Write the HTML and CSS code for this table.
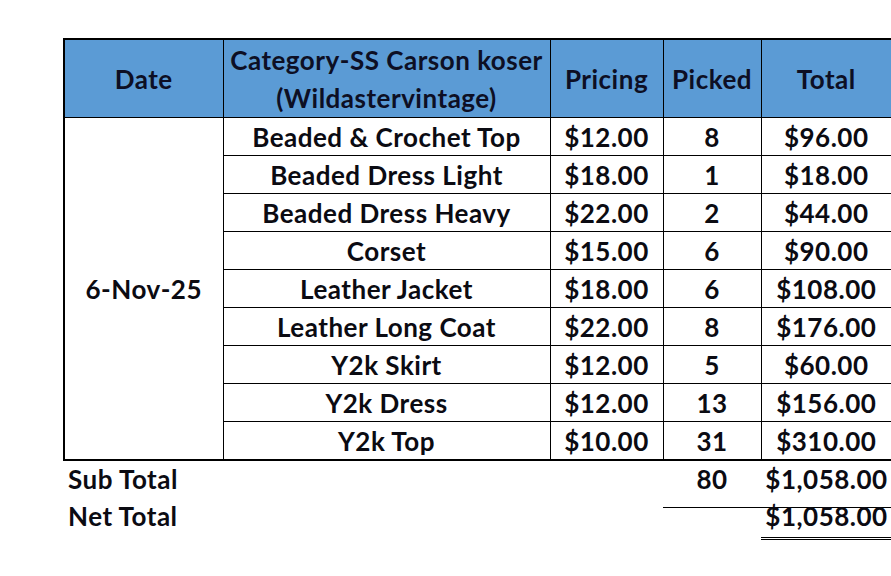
FILE: index.html
```html
<!DOCTYPE html>
<html>
<head>
<meta charset="utf-8">
<link rel="stylesheet" href="styles.css">
</head>
<body>
<div class="sheet">
<table class="report">
  <colgroup>
    <col class="c-date"><col class="c-cat"><col class="c-price"><col class="c-picked"><col class="c-total">
  </colgroup>
  <thead>
    <tr class="head">
      <th class="first left">Date</th>
      <th class="first">Category-SS Carson koser<br>(Wildastervintage)</th>
      <th class="first">Pricing</th>
      <th class="first">Picked</th>
      <th class="first right">Total</th>
    </tr>
  </thead>
  <tbody>
    <tr><td class="left last date" rowspan="9">6-Nov-25</td><td>Beaded &amp; Crochet Top</td><td>$12.00</td><td>8</td><td class="right">$96.00</td></tr>
    <tr><td>Beaded Dress Light</td><td>$18.00</td><td>1</td><td class="right">$18.00</td></tr>
    <tr><td>Beaded Dress Heavy</td><td>$22.00</td><td>2</td><td class="right">$44.00</td></tr>
    <tr><td>Corset</td><td>$15.00</td><td>6</td><td class="right">$90.00</td></tr>
    <tr><td>Leather Jacket</td><td>$18.00</td><td>6</td><td class="right">$108.00</td></tr>
    <tr><td>Leather Long Coat</td><td>$22.00</td><td>8</td><td class="right">$176.00</td></tr>
    <tr><td>Y2k Skirt</td><td>$12.00</td><td>5</td><td class="right">$60.00</td></tr>
    <tr><td>Y2k Dress</td><td>$12.00</td><td>13</td><td class="right">$156.00</td></tr>
    <tr><td class="last">Y2k Top</td><td class="last">$10.00</td><td class="last">31</td><td class="last right">$310.00</td></tr>
  </tbody>
  <tfoot>
    <tr class="sub">
      <td class="label">Sub Total</td><td></td><td></td><td class="under">80</td><td class="under">$1,058.00</td>
    </tr>
    <tr class="net">
      <td class="label">Net Total</td><td></td><td></td><td></td><td class="dbl">$1,058.00</td>
    </tr>
  </tfoot>
</table>
</div>
</body>
</html>
```
FILE: styles.css
```css
html, body {
  margin: 0;
  padding: 0;
  background: #ffffff;
}

.sheet {
  padding: 38px 0 0 63px;
}

.report {
  border-collapse: collapse;
  table-layout: fixed;
  width: 828px;
  font-family: Lato, "Open Sans", sans-serif;
  font-weight: 700;
  font-size: 26px;
  letter-spacing: 0.5px;
  color: #0b0b12;
}

.c-date { width: 159px; }
.c-cat { width: 327px; }
.c-price { width: 113px; }
.c-picked { width: 98px; }
.c-total { width: 131px; }

.report th,
.report tbody td {
  border: 1px solid #000;
  text-align: center;
  vertical-align: middle;
  padding: 0;
  white-space: nowrap;
}

.report .head th {
  background: #5b9bd5;
  color: #0d0f24;
  font-weight: 700;
  height: 77px;
  line-height: 38px;
}

.report tbody td {
  height: 37px;
  line-height: 30px;
}

.report .first { border-top: 2px solid #000; }
.report .left { border-left: 2px solid #000; }
.report .right { border-right: 2px solid #000; }
.report .last { border-bottom: 2px solid #000; }

.report tfoot td {
  border: none;
  padding: 0;
  text-align: center;
  white-space: nowrap;
  vertical-align: top;
}

.report tfoot .label {
  text-align: left;
  padding-left: 4px;
}

.report .sub td {
  line-height: 20px;
  padding-top: 8px;
  padding-bottom: 18px;
}

.report tfoot .under {
  border-bottom: 1px solid #000;
}

.report .net td {
  line-height: 16px;
  padding-top: 0;
  padding-bottom: 13px;
}

.report tfoot .dbl {
  border-bottom: 3px double #000;
}
```
